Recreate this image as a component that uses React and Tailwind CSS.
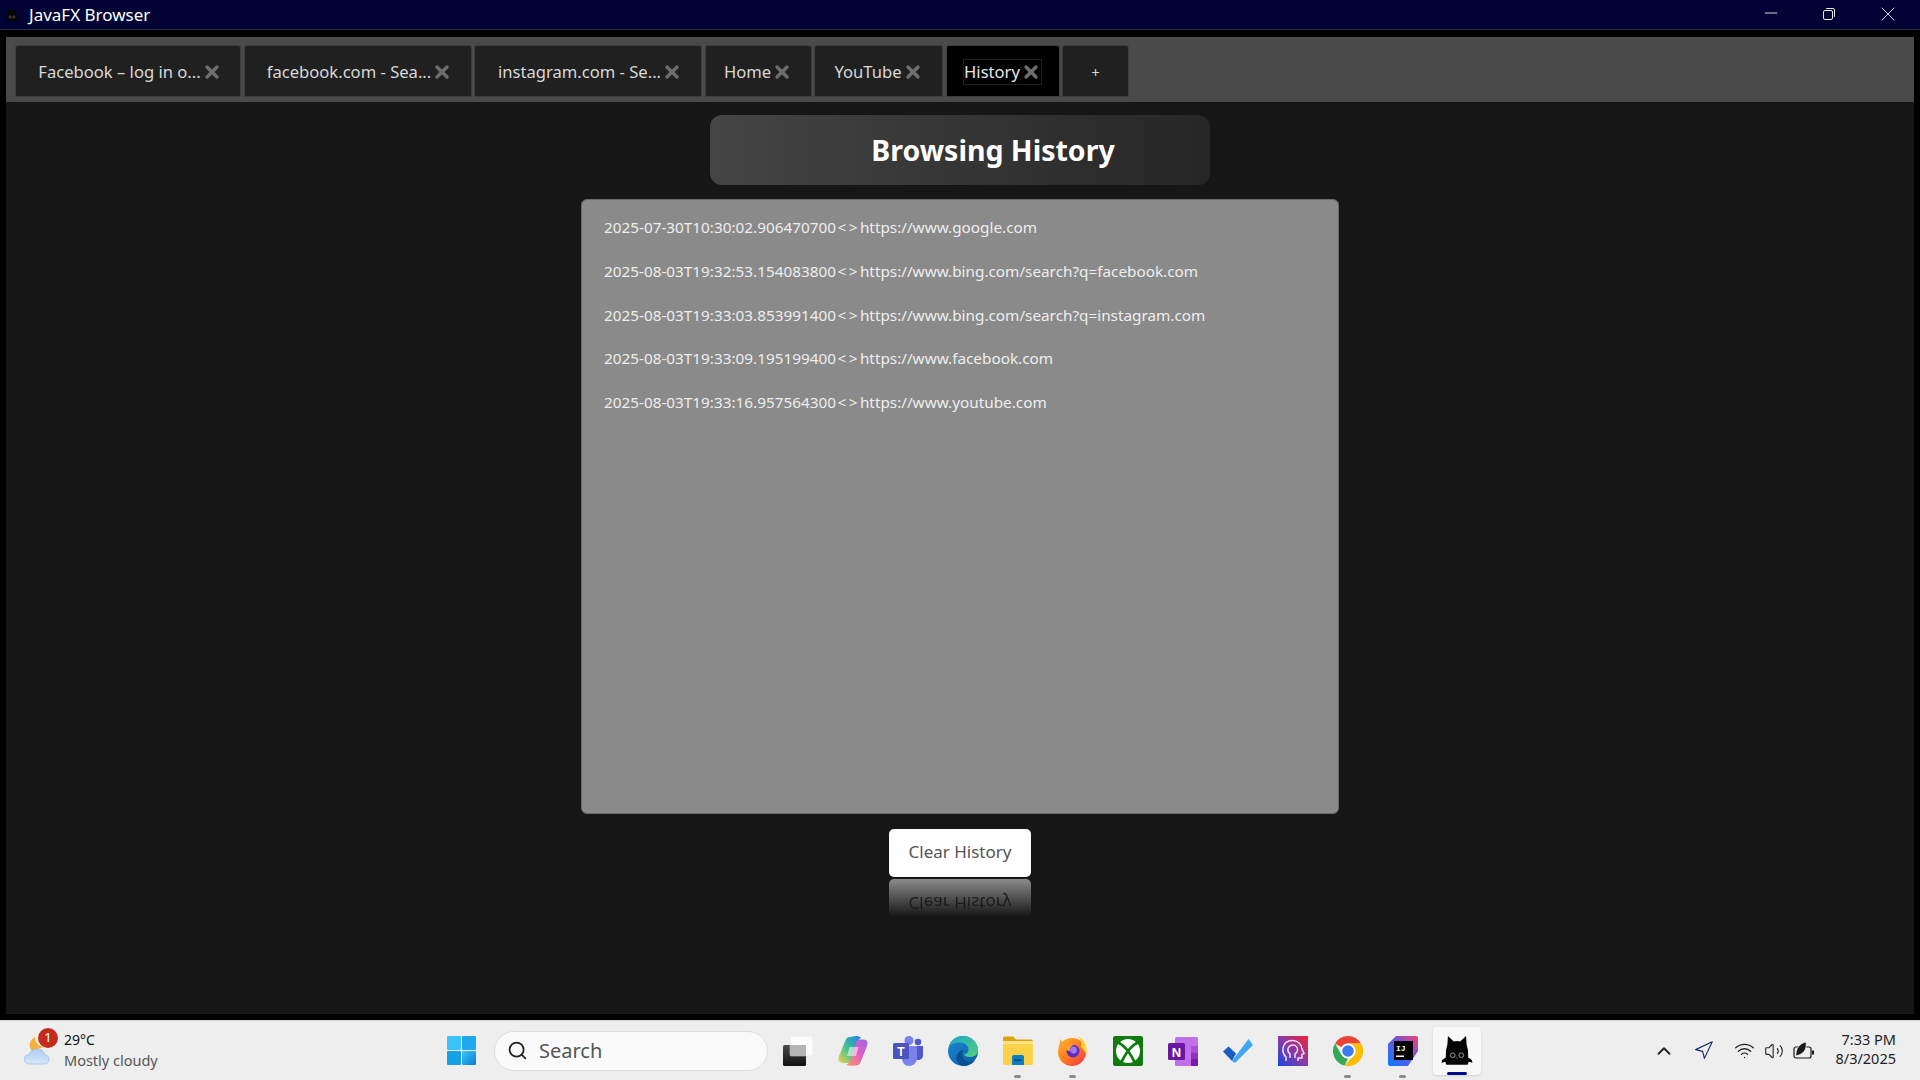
import { X, ChevronUp, Navigation, Wifi, Volume2, Search, Minus } from 'lucide-react';

const tabs = [
    { title: 'Facebook – log in o...', width: 'w-[226px] pl-[4px]' },
    { title: 'facebook.com - Sea...', width: 'w-[228px] pl-[4px]' },
    { title: 'instagram.com - Se...', width: 'w-[228px] pl-[4px]' },
    { title: 'Home', width: 'w-[107px]' },
    { title: 'YouTube', width: 'w-[129px]' },
    { title: 'History', width: 'w-[114px]', active: true },
];

const history = [
    '2025-07-30T10:30:02.906470700<>https://www.google.com',
    '2025-08-03T19:32:53.154083800<>https://www.bing.com/search?q=facebook.com',
    '2025-08-03T19:33:03.853991400<>https://www.bing.com/search?q=instagram.com',
    '2025-08-03T19:33:09.195199400<>https://www.facebook.com',
    '2025-08-03T19:33:16.957564300<>https://www.youtube.com',
];

const CatIcon = ({ className }) => (
    <svg viewBox="0 0 30 30" className={className}>
        <path d="M6 9 L6.5 1 L12 6 Q15 5.4 18 6 L23.5 1 L24 9 Q26 14 25.5 21 L27 22 Q29.5 23 29.5 26 L26 25 L25 28 L5 28 L4 25 L0.5 26 Q0.5 23 3 22 L4.5 21 Q4 14 6 9 Z" fill="#050505" />
        <circle cx="11" cy="19" r="2.2" fill="none" stroke="#9a9a9a" strokeWidth="0.9" />
        <circle cx="19" cy="19" r="2.2" fill="none" stroke="#9a9a9a" strokeWidth="0.9" />
        <circle cx="15" cy="21.5" r="0.6" fill="#9a9a9a" />
    </svg>
);

const TaskViewIcon = () => (
    <svg viewBox="0 0 30 30" className="w-[30px] h-[30px]">
        <defs>
            <linearGradient id="tvDark" x1="0" y1="0" x2="0" y2="1">
                <stop offset="0" stopColor="#4a4a4a" />
                <stop offset="1" stopColor="#111" />
            </linearGradient>
        </defs>
        <rect x="0" y="9" width="23" height="21" rx="1.5" fill="url(#tvDark)" />
        <rect x="7" y="0" width="23" height="20" rx="1.5" fill="#fff" fillOpacity="0.8" stroke="#dcdcdc" strokeWidth="0.5" />
        <rect x="7" y="9" width="16" height="11" fill="#b5b5b5" />
    </svg>
);

const CopilotIcon = () => (
    <svg viewBox="0 0 30 30" className="w-[30px] h-[30px]">
        <defs>
            <linearGradient id="copA" x1="0" y1="1" x2="1" y2="0">
                <stop offset="0" stopColor="#f7d24a" />
                <stop offset="0.45" stopColor="#43c48f" />
                <stop offset="1" stopColor="#1f7ff0" />
            </linearGradient>
            <linearGradient id="copB" x1="0" y1="1" x2="1" y2="0">
                <stop offset="0" stopColor="#f5a05a" />
                <stop offset="0.5" stopColor="#e45fc0" />
                <stop offset="1" stopColor="#9a63e8" />
            </linearGradient>
        </defs>
        <path d="M12 1 C9 1 7.8 3 7 5.5 L1 20 C-0.5 24 1 27 5 27 H10 C12.5 27 13.5 25.5 14.2 23.5 L19 8 C20 5 21 3 23 1.5 C21.5 0.5 20 0 18 0 Z" fill="url(#copA)" />
        <path d="M18 29.5 C21 29.5 22.2 27.5 23 25 L29 10 C30.5 6 29 3.5 25 3.5 H22 C19.5 3.5 18.5 5 17.8 7 L13 22.5 C12 25.5 11 27.5 8.5 28.8 C10 29.5 11 29.8 13 29.8 Z" fill="url(#copB)" />
        <path d="M11.5 11 H20.5 L18 20 H9 Z" fill="#fff" fillOpacity="0.55" />
    </svg>
);

const TeamsIcon = () => (
    <svg viewBox="0 0 30 30" className="w-[30px] h-[30px]">
        <circle cx="16" cy="4.5" r="4.5" fill="#7b83eb" />
        <circle cx="25" cy="6" r="3.3" fill="#5059c9" />
        <path d="M21 10 H30 V19 C30 22 28 24 25 24 C23 24 21 23 21 21 Z" fill="#5059c9" />
        <path d="M9 10 H24 V22 C24 27 20 30 16 30 C12 30 9 27 9 22 Z" fill="#7b83eb" />
        <rect x="0" y="7" width="16" height="16" rx="1.5" fill="#4b53bc" />
        <text x="8" y="19.5" textAnchor="middle" fontSize="12" fontWeight="700" fill="#fff" fontFamily="Liberation Sans, sans-serif">T</text>
    </svg>
);

const EdgeIcon = () => (
    <svg viewBox="0 0 30 30" className="w-[30px] h-[30px]">
        <defs>
            <linearGradient id="edgeA" x1="0" y1="0" x2="1" y2="1">
                <stop offset="0" stopColor="#1fa6c9" />
                <stop offset="1" stopColor="#52d17c" />
            </linearGradient>
            <linearGradient id="edgeB" x1="0" y1="0" x2="1" y2="1">
                <stop offset="0" stopColor="#1c8bd6" />
                <stop offset="1" stopColor="#0c59a4" />
            </linearGradient>
        </defs>
        <circle cx="15" cy="15" r="15" fill="url(#edgeB)" />
        <path d="M1 10 C3 3.5 9 0 15 0 C24 0 30 7 30 14 C30 19 26 21 22 21 C18.5 21 16.5 20 16 18.5 C19 18 20.5 16 20.5 13.5 C20.5 9.5 16.5 6.5 12 6.5 C7 6.5 3 8 1 10 Z" fill="url(#edgeA)" />
        <path d="M15 30 C9 28.5 7.5 23 9 19 C10.5 15.5 13.5 14 15.5 14 C13.5 17 14 22 17.5 24.5 C20.5 26.5 24.5 26 27 24.5 C24.5 28 20 30 15 30 Z" fill="#0a4f8f" />
    </svg>
);

const ExplorerIcon = () => (
    <svg viewBox="0 0 30 30" className="w-[30px] h-[30px]">
        <path d="M0 2 Q0 0.5 1.5 0.5 H10 L13 3.5 H28 Q30 3.5 30 5.5 V10 H0 Z" fill="#d9a20f" />
        <path d="M0 5 H30 V27.5 Q30 29 28.5 29 H1.5 Q0 29 0 27.5 Z" fill="#fbd148" />
        <path d="M0 5 H30 V8 H0 Z" fill="#fce38a" />
        <path d="M9 21 Q9 19 11 19 H19 Q21 19 21 21 V29 H9 Z" fill="#0c7fc4" />
        <rect x="11.5" y="23.5" width="7" height="1.5" fill="#053c66" />
    </svg>
);

const FirefoxIcon = () => (
    <svg viewBox="0 0 30 30" className="w-[30px] h-[30px]">
        <defs>
            <linearGradient id="ffA" x1="0" y1="0" x2="1" y2="1">
                <stop offset="0" stopColor="#ffb52e" />
                <stop offset="0.5" stopColor="#ff7a1f" />
                <stop offset="1" stopColor="#f0324c" />
            </linearGradient>
        </defs>
        <circle cx="14" cy="16" r="14" fill="url(#ffA)" />
        <path d="M20 0 C26 3 30 9 28.5 18 L23 11 C24 7 23 3.5 20 0 Z" fill="#ffd23f" />
        <path d="M1 10 L2.5 3 L5 8 C7 6 9 5 11 5 L7 11 Z" fill="#ff9d2e" />
        <circle cx="15" cy="15" r="6.5" fill="#5b2fc0" />
        <circle cx="15.5" cy="14" r="3.4" fill="#a679e6" />
        <path d="M6 12 C9 9 14 7.5 17 8.5 C13 9.5 11.5 12 12 15 C9 15 7 14 6 12 Z" fill="#ff9d2e" />
    </svg>
);

const XboxIcon = () => (
    <svg viewBox="0 0 30 30" className="w-[30px] h-[30px]">
        <rect width="30" height="30" rx="2" fill="#107c10" />
        <circle cx="15" cy="15" r="12" fill="#fff" />
        <g fill="none" stroke="#107c10" strokeWidth="2.6">
            <path d="M4 6 C12 9 18 18 23 29" />
            <path d="M26 6 C18 9 12 18 7 29" />
        </g>
        <path d="M15 11 L9 5.5 L21 5.5 Z" fill="#fff" />
    </svg>
);

const OneNoteIcon = () => (
    <svg viewBox="0 0 30 30" className="w-[30px] h-[30px]">
        <rect x="7" y="1" width="23" height="29" rx="1.5" fill="#c070e8" />
        <rect x="23" y="10" width="7" height="6.5" fill="#ab4fd9" />
        <rect x="23" y="16.5" width="7" height="6.5" fill="#8f34bd" />
        <rect x="23" y="23" width="7" height="7" rx="1" fill="#7719aa" />
        <rect x="0" y="7" width="17" height="17" rx="1.5" fill="#6a179e" />
        <text x="8.5" y="20.5" textAnchor="middle" fontSize="13" fontWeight="700" fill="#fff" fontFamily="Liberation Sans, sans-serif">N</text>
    </svg>
);

const TodoIcon = () => (
    <svg viewBox="0 0 30 30" className="w-[30px] h-[30px]">
        <path d="M0 15.5 L5.5 10.5 L13 17.5 L9 25 Z" fill="#1b5cc4" />
        <path d="M9 25 L25.5 3 L30 9 L13 26 Q11 27.5 9 25 Z" fill="#43a6f0" />
    </svg>
);

const PasswordsIcon = () => (
    <svg viewBox="0 0 30 30" className="w-[30px] h-[30px]">
        <defs>
            <linearGradient id="pwA" x1="0" y1="1" x2="1" y2="0">
                <stop offset="0" stopColor="#1546e0" />
                <stop offset="0.5" stopColor="#8a3aa8" />
                <stop offset="1" stopColor="#f5232f" />
            </linearGradient>
        </defs>
        <rect width="30" height="30" fill="url(#pwA)" />
        <path d="M8 25 V21 C5 18 4.5 15 5 12 C6 7 10 4.5 14.5 4.5 C20 4.5 23.5 8.5 24 13 L26 17.5 L24 18.5 V22 H20 V25" fill="none" stroke="#f1dcf5" strokeWidth="1.5" />
        <path d="M12 22 V18 C10 16.5 9.5 14.5 10 12.5 C11 10 13 9 15 9 C18 9 20 11.5 19.5 14.5 C19 16.5 18 17.5 17 18 V22" fill="none" stroke="#f1dcf5" strokeWidth="1.5" />
    </svg>
);

const ChromeIcon = () => (
    <svg viewBox="0 0 30 30" className="w-[30px] h-[30px]">
        <path d="M15 0 A15 15 0 0 1 28 7.5 H15 A7.5 7.5 0 0 0 8.5 11.3 L2 7.5 A15 15 0 0 1 15 0 Z" fill="#ea4335" />
        <path d="M2 7.5 L8.5 18.8 A7.5 7.5 0 0 0 15 22.5 L11.5 29.6 A15 15 0 0 1 2 7.5 Z" fill="#34a853" />
        <path d="M28 7.5 A15 15 0 0 1 11.5 29.6 L18.2 22 A7.5 7.5 0 0 0 21.5 11.3 L15 7.5 Z" fill="#fbbc04" />
        <circle cx="15" cy="15" r="7.5" fill="#fff" />
        <circle cx="15" cy="15" r="5.8" fill="#3b7bf0" />
    </svg>
);

const IdeaIcon = () => (
    <svg viewBox="0 0 30 30" className="w-[30px] h-[30px]">
        <defs>
            <linearGradient id="ijA" x1="0" y1="1" x2="1" y2="0">
                <stop offset="0" stopColor="#0a7bff" />
                <stop offset="0.55" stopColor="#6b57e0" />
                <stop offset="1" stopColor="#fb3d6e" />
            </linearGradient>
        </defs>
        <path d="M8 0 H28 Q30 0 30 2 V15 L20 30 H2 Q0 30 0 28 V8 Z" fill="url(#ijA)" />
        <rect x="6" y="5" width="19" height="19" fill="#000" />
        <text x="8" y="14.5" fontSize="8" fontWeight="700" fill="#fff" fontFamily="Liberation Mono, monospace">IJ</text>
        <rect x="8" y="19.5" width="8" height="1.5" fill="#fff" />
    </svg>
);

const WeatherIcon = () => (
    <svg viewBox="0 0 32 32" className="w-[32px] h-[32px]">
        <defs>
            <linearGradient id="cloudA" x1="0" y1="0" x2="0" y2="1">
                <stop offset="0" stopColor="#a9cdf5" />
                <stop offset="1" stopColor="#d9e6f5" />
            </linearGradient>
        </defs>
        <path d="M11 2 C5 5 4 12 8 16 L20 12 C14 11 11 7 11 2 Z" fill="#f5b13d" />
        <path d="M6 29 C1.5 29 0 26 0 24.5 C0 21.5 2.5 19.5 5 19.5 C6 16 9.5 14 13 14 C17.5 14 20.5 17 21 20 C24 20 25 22.5 25 24.5 C25 27 23 29 20 29 Z" fill="url(#cloudA)" stroke="#8db6e8" strokeWidth="0.6" />
    </svg>
);

const WindowsLogo = () => (
    <svg viewBox="0 0 29 29" className="w-[29px] h-[29px]">
        <defs>
            <linearGradient id="winA" x1="0" y1="0" x2="1" y2="1">
                <stop offset="0" stopColor="#3cc8f8" />
                <stop offset="1" stopColor="#0a78d6" />
            </linearGradient>
        </defs>
        <rect x="0" y="0" width="14" height="14" rx="1" fill="#38c4f8" />
        <rect x="15" y="0" width="14" height="14" rx="1" fill="#1fa8ee" />
        <rect x="0" y="15" width="14" height="14" rx="1" fill="#15a0e8" />
        <rect x="15" y="15" width="14" height="14" rx="1" fill="url(#winA)" />
    </svg>
);

const BatteryIcon = () => (
    <svg viewBox="0 0 22 20" className="w-[22px] h-[20px]" fill="none" stroke="#1a1a1a" strokeWidth="1.2">
        <rect x="1" y="6" width="17" height="11" rx="2" />
        <rect x="19" y="9.5" width="2" height="4" fill="#1a1a1a" stroke="none" />
        <path d="M3 15 C2 8 7 2 13 1 C14 6 12 12 6 14 Z" fill="#1a1a1a" stroke="#eee" strokeWidth="0.8" />
    </svg>
);

const taskbarApps = [
    { id: 'taskview', icon: <TaskViewIcon /> },
    { id: 'copilot', icon: <CopilotIcon /> },
    { id: 'teams', icon: <TeamsIcon /> },
    { id: 'edge', icon: <EdgeIcon /> },
    { id: 'explorer', icon: <ExplorerIcon />, running: true },
    { id: 'firefox', icon: <FirefoxIcon />, running: true },
    { id: 'xbox', icon: <XboxIcon /> },
    { id: 'onenote', icon: <OneNoteIcon /> },
    { id: 'todo', icon: <TodoIcon /> },
    { id: 'passwords', icon: <PasswordsIcon /> },
    { id: 'chrome', icon: <ChromeIcon />, running: true },
    { id: 'idea', icon: <IdeaIcon />, running: true },
];

const App = () => {
    return (
        <div className="w-[1920px] h-[1080px] flex flex-col overflow-hidden bg-black font-['Noto_Sans',sans-serif]">
            {/* title bar */}
            <div className="h-[30px] shrink-0 flex items-center bg-[#000333] border-b border-[#2b2d45]">
                <CatIcon className="w-[14px] h-[14px] ml-[5px]" />
                <span className="ml-[10px] text-[17px] text-white">JavaFX Browser</span>
                <div className="ml-auto flex items-center">
                    <div className="w-[58px] flex justify-center -mt-[3px]">
                        <Minus className="w-[20px] h-[20px] text-[#e8e8f0]" strokeWidth={1.1} />
                    </div>
                    <div className="w-[58px] flex justify-center mr-[1px] -mt-[1px]">
                        <svg viewBox="0 0 12 12" className="w-[12px] h-[12px]" fill="none" stroke="#e8e8f0" strokeWidth="1">
                            <rect x="0.5" y="2.5" width="9" height="9" rx="1.5" />
                            <path d="M3 1 Q3 0.5 4 0.5 H10 Q11.5 0.5 11.5 2 V8 Q11.5 9 11 9" />
                        </svg>
                    </div>
                    <div className="w-[58px] flex justify-center mr-[3px] -mt-[1px]">
                        <X className="w-[24px] h-[24px] text-[#e8e8f0]" strokeWidth={0.9} />
                    </div>
                </div>
            </div>

            {/* browser window */}
            <div className="flex-1 min-h-0 flex flex-col px-[6px] pt-[7px] pb-[6px]">
                <div className="h-[65px] shrink-0 flex items-start gap-[2.5px] pt-[8px] pl-[9px] bg-[#4a4a4a]">
                    {tabs.map(tab => (
                        <div
                            key={tab.title}
                            className={`${tab.width} h-[52px] pt-[2px] flex items-center justify-center rounded-t-[3px] border border-[#3d3d3d] text-[16.6px] ${
                                tab.active ? 'bg-black text-[#e6e6e6]' : 'bg-[#202020] text-[#d8d8d8]'
                            }`}
                        >
                            <span className={tab.active ? 'flex items-center gap-[1px] border border-[#1f1f1f]' : 'flex items-center gap-[1px]'}>
                                {tab.title}
                                <X className="w-[20px] h-[20px] text-[#6e6e6e]" strokeWidth={4} />
                            </span>
                        </div>
                    ))}
                    <div className="w-[67px] h-[52px] pt-[2px] flex items-center justify-center rounded-t-[3px] border border-[#3d3d3d] bg-[#202020] text-[15px] text-[#d8d8d8]">
                        +
                    </div>
                </div>

                <div className="flex-1 min-h-0 flex flex-col items-center pt-[13px] bg-[#161616]">
                    <div className="w-[500px] h-[70px] shrink-0 flex items-center justify-center pl-[66px] rounded-[12px] bg-gradient-to-r from-[#454545] to-[#262626]">
                        <h1 className="text-[28.5px] font-bold text-white">Browsing History</h1>
                    </div>

                    <div className="w-[758px] h-[615px] shrink-0 mt-[14px] pt-[6px] px-[22px] rounded-[6px] border border-[#6a6a6a] bg-[#8a8a8a]">
                        {history.map(row => {
                            const [stamp, url] = row.split('<>');
                            return (
                                <div key={row} className="h-[43.7px] flex items-center text-[15.3px] text-[#eeeeee]">
                                    {stamp}
                                    <span className="tracking-[2.5px] ml-[1.5px]">{'<>'}</span>
                                    {url}
                                </div>
                            );
                        })}
                    </div>

                    <button className="w-[142px] h-[48px] shrink-0 mt-[15px] pb-[2px] flex items-center justify-center rounded-[5px] bg-white text-[17px] text-[#555]">
                        Clear History
                    </button>
                    {/* reflection under the button */}
                    <div className="w-[142px] h-[38px] shrink-0 mt-[2px] overflow-hidden [mask-image:linear-gradient(to_bottom,rgba(0,0,0,0.5),rgba(0,0,0,0))]">
                        <div className="h-[48px] -scale-y-100 flex items-center justify-center rounded-[5px] bg-white text-[17px] text-[#333]">
                            Clear History
                        </div>
                    </div>
                </div>
            </div>

            {/* taskbar */}
            <div className="h-[60px] shrink-0 flex items-center bg-[#eeeeee] border-t border-[#d4d4d4]">
                <div className="relative w-[434px] h-full flex items-center pl-[24px]">
                    <WeatherIcon />
                    <span className="absolute left-[38px] top-[7px] w-[20px] h-[20px] flex items-center justify-center rounded-full bg-[#c42b1c] text-[13px] text-white">1</span>
                    <div className="ml-[8px] -mt-[2px] flex flex-col leading-[20px]">
                        <span className="text-[14px] text-[#111]">29°C</span>
                        <span className="text-[14.5px] text-[#555]">Mostly cloudy</span>
                    </div>
                </div>

                <div className="w-[55px] flex justify-center">
                    <WindowsLogo />
                </div>
                <div className="w-[274px] h-[40px] ml-[5px] mr-[2px] flex items-center gap-[11px] pl-[12px] rounded-full border border-[#dedede] bg-[#fafafa]">
                    <Search className="w-[21px] h-[21px] text-[#222]" strokeWidth={2} />
                    <span className="text-[20px] text-[#555]">Search</span>
                </div>

                {taskbarApps.map(app => (
                    <div key={app.id} className="relative w-[55px] h-full flex items-center justify-center">
                        {app.icon}
                        {app.running && (
                            <span className="absolute bottom-[2px] w-[7px] h-[3px] rounded-full bg-[#8a8a8a]" />
                        )}
                    </div>
                ))}

                <div className="relative w-[48px] h-[48px] ml-[3px] flex items-center justify-center rounded-[4px] bg-[#f8f8f8] shadow-sm">
                    <CatIcon className="w-[32px] h-[32px]" />
                    <span className="absolute bottom-[0px] w-[20px] h-[3px] rounded-full bg-[#000a8a]" />
                </div>

                <div className="ml-auto flex items-center">
                    <ChevronUp className="w-[22px] h-[22px] text-[#222]" strokeWidth={2} />
                    <Navigation className="w-[21px] h-[21px] ml-[18px] text-[#1b2a6b]" strokeWidth={1.3} />
                    <Wifi className="w-[21px] h-[21px] ml-[20px] text-[#222]" strokeWidth={1.5} />
                    <Volume2 className="w-[20px] h-[20px] ml-[9px] text-[#222]" strokeWidth={1.3} />
                    <div className="ml-[9px]"><BatteryIcon /></div>
                    <div className="ml-[20px] mr-[24px] -mt-[3px] flex flex-col items-end leading-[19px] text-[14.5px] text-[#222]">
                        <span>7:33 PM</span>
                        <span>8/3/2025</span>
                    </div>
                </div>
            </div>
        </div>
    );
};

export default App;
